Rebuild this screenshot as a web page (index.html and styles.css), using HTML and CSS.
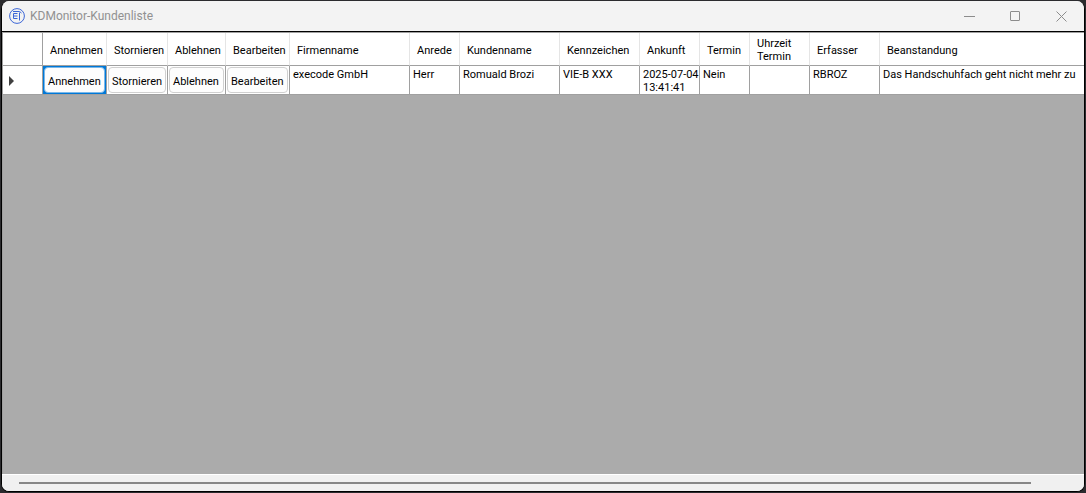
FILE: index.html
```html
<!DOCTYPE html>
<html lang="de">
<head>
    <meta charset="UTF-8">
    <meta name="viewport" content="width=device-width, initial-scale=1.0">
    <title>KDMonitor-Kundenliste</title>
    <link rel="stylesheet" href="styles.css">
</head>
<body>
    <div class="window">
        <header class="titlebar">
            <svg class="logo" viewBox="0 0 16 16" aria-hidden="true">
                <circle cx="8" cy="8" r="7.4"/>
                <path d="M8.500 5.500H4.500v5h4M4.500 8h4M10.500 12.500v-8M4 3.500h6.500l2 1.500"/>
            </svg>
            <span class="title">KDMonitor-Kundenliste</span>
            <div class="controls">
                <button type="button" aria-label="Minimieren"><svg viewBox="0 0 11 11"><path d="M0 5.500h11"/></svg></button>
                <button type="button" aria-label="Maximieren"><svg viewBox="0 0 11 11"><rect x=".5" y=".5" width="9" height="9" rx=".5"/></svg></button>
                <button type="button" aria-label="Schließen"><svg viewBox="0 0 11 11"><path d="M.5.5l10 10M10.500.5l-10 10"/></svg></button>
            </div>
        </header>

        <main class="grid">
            <table>
                <colgroup>
                    <col class="w-kopf">
                    <col class="w-button">
                    <col class="w-storno">
                    <col class="w-ablehnen">
                    <col class="w-button">
                    <col class="w-firma">
                    <col class="w-klein">
                    <col class="w-kunde">
                    <col class="w-kennzeichen">
                    <col class="w-mittel">
                    <col class="w-klein">
                    <col class="w-mittel">
                    <col class="w-erfasser">
                    <col>
                </colgroup>
                <thead>
                    <tr>
                        <td></td>
                        <th>Annehmen</th>
                        <th>Stornieren</th>
                        <th>Ablehnen</th>
                        <th>Bearbeiten</th>
                        <th>Firmenname</th>
                        <th>Anrede</th>
                        <th>Kundenname</th>
                        <th>Kennzeichen</th>
                        <th>Ankunft</th>
                        <th>Termin</th>
                        <th>Uhrzeit Termin</th>
                        <th>Erfasser</th>
                        <th>Beanstandung</th>
                    </tr>
                </thead>
                <tbody>
                    <tr>
                        <td class="marker"><svg viewBox="0 0 5 10"><path d="M0 0l5 5-5 5z"/></svg></td>
                        <td class="action selected"><button type="button">Annehmen</button></td>
                        <td class="action"><button type="button">Stornieren</button></td>
                        <td class="action"><button type="button">Ablehnen</button></td>
                        <td class="action"><button type="button">Bearbeiten</button></td>
                        <td>execode GmbH</td>
                        <td>Herr</td>
                        <td>Romuald Brozi</td>
                        <td>VIE-B XXX</td>
                        <td><span class="text">2025-07-04</span> 13:41:41</td>
                        <td>Nein</td>
                        <td></td>
                        <td>RBROZ</td>
                        <td class="text">Das Handschuhfach geht nicht mehr zu</td>
                    </tr>
                </tbody>
            </table>
        </main>

        <div class="scrollbar"><div class="thumb"></div></div>
    </div>
</body>
</html>
```
FILE: styles.css
```css
* {
    box-sizing: border-box;
}

body {
    margin: 0;
    height: 100vh;
    padding: 1px;
    background-color: #2b2b2e;
    font-family: Roboto, "Liberation Sans", sans-serif;
    font-size: 11px;
    line-height: 13px;
    color: #000;
}

.window {
    display: flex;
    flex-direction: column;
    height: 100%;
    border: 1px solid #000;
    border-top: none;
    border-radius: 8px;
    overflow: hidden;
    background-color: #f0f0f0;
}

/* Titelleiste */
.titlebar {
    display: flex;
    align-items: center;
    flex: none;
    height: 31px;
    padding-left: 7px;
    background-color: #f3f3f3;
    border-bottom: 1px solid #000;
}

.logo {
    width: 16px;
    height: 16px;
    margin-right: 5px;
    fill: none;
    stroke: #3c66d6;
}

.title {
    flex: 1;
    font-size: 12px;
    line-height: 16px;
    color: #919191;
}

.controls {
    display: flex;
}

.controls button {
    display: flex;
    align-items: center;
    justify-content: center;
    width: 46px;
    height: 30px;
    padding: 0;
    border: none;
    background: none;
}

.controls svg {
    width: 11px;
    height: 11px;
    fill: none;
    stroke: #8c8c8c;
}

/* Kundenliste */
.grid {
    flex: 1;
    min-height: 0;
    overflow: hidden;
    background-color: #ababab;
    border-top: 1px solid #a0a0a0;
    border-left: 1px solid #a0a0a0;
}

table {
    width: 100%;
    table-layout: fixed;
    border-collapse: separate;
    border-spacing: 0;
    background-color: #fff;
}

.w-kopf { width: 40px; }
.w-button { width: 64px; }
.w-storno { width: 61px; }
.w-ablehnen { width: 58px; }
.w-firma { width: 120px; }
.w-klein { width: 50px; }
.w-kunde { width: 100px; }
.w-kennzeichen { width: 80px; }
.w-mittel { width: 60px; }
.w-erfasser { width: 70px; }

th,
td {
    padding: 2px 0 0 3px;
    border-right: 1px solid #a0a0a0;
    border-bottom: 1px solid #a0a0a0;
    font-weight: normal;
    text-align: left;
    vertical-align: top;
}

th {
    height: 33px;
    padding: 2px 7px 0;
    border-right-color: #e5e5e5;
    vertical-align: middle;
}

tbody td {
    height: 29px;
}

th:last-child,
td:last-child {
    border-right: none;
}

.text {
    white-space: nowrap;
}

td.marker {
    padding: 2px 0 0 6px;
    vertical-align: middle;
}

.marker svg {
    display: block;
    width: 5px;
    height: 10px;
    fill: #404040;
}

td.action {
    padding: 1px;
}

.action button {
    display: block;
    width: 100%;
    height: 26px;
    padding: 2px 0 0 3px;
    border: 1px solid #d0d0d0;
    border-radius: 4px;
    background-color: #fdfdfd;
    font: inherit;
    color: inherit;
    text-align: left;
}

td.selected {
    background-color: #0078d7;
}

.selected button {
    border-color: #7ab8ea;
}

/* Horizontale Bildlaufleiste */
.scrollbar {
    flex: none;
    height: 17px;
    padding: 7px 53px 0 17px;
    border-top: 1px solid #fff;
    background-color: #f0f0f0;
}

.thumb {
    height: 2px;
    background-color: #868686;
}
```
